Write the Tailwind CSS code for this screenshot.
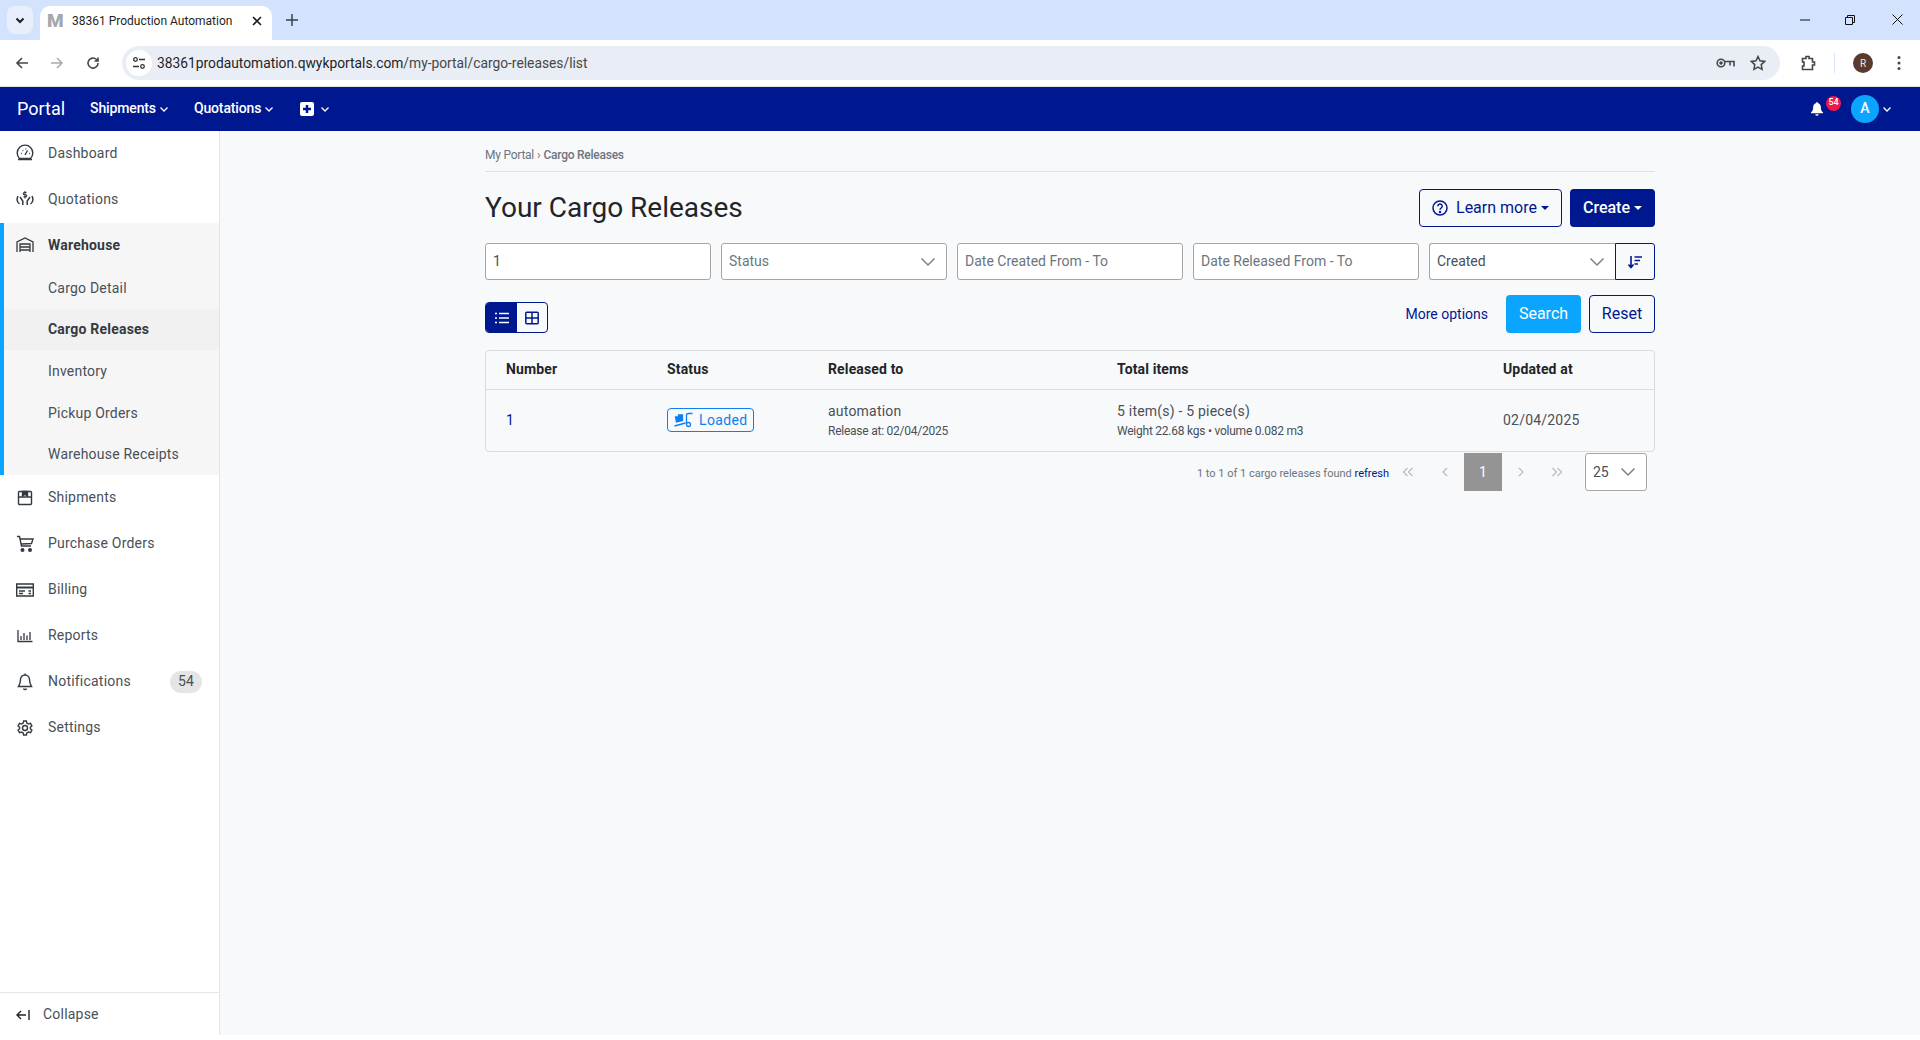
<!DOCTYPE html>
<html lang="en">
<head>
    <meta charset="UTF-8">
    <title>38361 Production Automation</title>
    <script src="https://cdn.jsdelivr.net/npm/@tailwindcss/browser@4"></script>
</head>
<body class="font-['Roboto',sans-serif] bg-white h-[1040px] overflow-hidden">
    <!-- Browser tab strip -->
    <div class="h-10 bg-[#d3e3fd] flex items-end relative">
        <div class="w-[26px] h-7 ml-[7px] mb-[6px] rounded-lg bg-[#e7effd] flex items-center justify-center">
            <svg class="w-3 h-3" viewBox="0 0 12 12" fill="none" stroke="#1f1f1f" stroke-width="2"><path d="M2.500 4.500 6 8l3.500-3.500"/></svg>
        </div>
        <div class="w-[232px] h-[34px] ml-[7px] pb-[5px] bg-white rounded-t-[10px] flex items-center pl-[7px]">
            <span class="font-black text-[19px] text-[#a3a8ad] w-[19px] leading-none">M</span>
            <span class="ml-[6px] text-[12px] text-[#1f1f1f] whitespace-nowrap">38361 Production Automation</span>
            <svg class="w-3 h-3 ml-auto mr-[9px]" viewBox="0 0 12 12" stroke="#1f1f1f" stroke-width="1.600"><path d="M2 2l8 8M10 2l-8 8"/></svg>
        </div>
        <svg class="w-3 h-3 ml-[14px] mb-[14px]" viewBox="0 0 12 12" stroke="#3c4043" stroke-width="1.500"><path d="M6 0v12M0 6h12"/></svg>
        <div class="ml-auto flex items-center h-10 pb-[1px]">
            <svg class="w-[10px] h-[10px] mr-[35px]" viewBox="0 0 10 10" stroke="#111" stroke-width="1"><path d="M0 5h10"/></svg>
            <svg class="w-[10px] h-[10px] mr-[37px]" viewBox="0 0 10 10" fill="none" stroke="#111" stroke-width="1"><path d="M.5 2.500h7v7h-7zM2.500 2.500v-2h7v7h-2"/></svg>
            <svg class="w-[11px] h-[11px] mr-[17px]" viewBox="0 0 11 11" stroke="#111" stroke-width="1"><path d="M.5.5l10 10M10.500.5l-10 10"/></svg>
        </div>
    </div>

    <!-- Browser toolbar -->
    <div class="h-[47px] bg-white rounded-t-lg border-b border-[#dfe1e5] flex items-center">
        <svg class="w-[14px] h-[14px] ml-[15px]" viewBox="0 0 14 14" fill="none" stroke="#474747" stroke-width="1.600"><path d="M13 7H2M7 2 2 7l5 5"/></svg>
        <svg class="w-[14px] h-[14px] ml-[21px]" viewBox="0 0 14 14" fill="none" stroke="#a8abaf" stroke-width="1.600"><path d="M1 7h11M7 2l5 5-5 5"/></svg>
        <svg class="w-[14px] h-[14px] ml-[22px]" viewBox="0 0 14 14" fill="none" stroke="#474747" stroke-width="1.600"><path d="M12 7a5 5 0 1 1-1.500-3.500L12 5M12 1.500V5H8.500"/></svg>
        <div class="w-[1658px] h-[34px] ml-[22px] rounded-full bg-[#e9eef6] flex items-center pl-[4px] relative">
            <div class="w-[26px] h-[26px] rounded-full bg-white flex items-center justify-center">
                <svg class="w-[14px] h-[14px]" viewBox="0 0 14 14" fill="none" stroke="#333" stroke-width="1.300"><circle cx="3.500" cy="3.500" r="1.800"/><path d="M7 3.500h6M1 10.500h6"/><circle cx="10.500" cy="10.500" r="1.800"/></svg>
            </div>
            <span class="ml-[5px] text-[13.800px] text-[#1f1f1f] whitespace-nowrap">38361prodautomation.qwykportals.com<span class="text-[#474747]">/my-portal/cargo-releases/list</span></span>
            <svg class="w-[19px] h-[12px] ml-auto mr-[15px]" viewBox="0 0 19 12" fill="none" stroke="#474747" stroke-width="1.600"><circle cx="5" cy="6" r="3.800"/><circle cx="5" cy="6" r="1" fill="#474747"/><path d="M9 4.500h9v5M14 4.500v4"/></svg>
            <svg class="w-4 h-4 mr-[14px]" viewBox="0 0 16 16" fill="none" stroke="#474747" stroke-width="1.500"><path d="M8 1.500l2 4.300 4.700.6-3.500 3.200.9 4.700L8 12l-4.100 2.300.9-4.700L1.300 6.400 6 5.800z"/></svg>
        </div>
        <svg class="w-4 h-4 ml-[21px]" viewBox="0 0 16 16" fill="none" stroke="#474747" stroke-width="1.600"><path d="M1.500 3.500h3.500V1.500h3v2h3.500v3.500h2v3h-2v4.500h-10V11h1.500V7H1.500z"/></svg>
        <div class="w-[1px] h-5 bg-[#d3e3fd] ml-[17px]"></div>
        <div class="w-5 h-5 rounded-full bg-[#5b3a2e] text-[#f1e7e2] text-[10px] flex items-center justify-center ml-[18px]">R</div>
        <svg class="w-1 h-4 ml-[24px]" viewBox="0 0 4 16" fill="#474747"><circle cx="2" cy="2.500" r="1.500"/><circle cx="2" cy="8" r="1.500"/><circle cx="2" cy="13.500" r="1.500"/></svg>
    </div>

    <!-- Portal navbar -->
    <nav class="h-11 pb-[1px] bg-[#00188f] text-white flex items-center">
        <span class="ml-[17px] text-[18px]">Portal</span>
        <span class="ml-[25px] text-[14px] font-medium tracking-[-0.01em]">Shipments</span>
        <svg class="w-[10px] h-[10px] ml-[3px]" viewBox="0 0 10 10" fill="none" stroke="#fff" stroke-width="1.300"><path d="M1.500 3.500 5 7l3.500-3.500"/></svg>
        <span class="ml-[25px] text-[14px] font-medium tracking-[-0.01em]">Quotations</span>
        <svg class="w-[10px] h-[10px] ml-[3px]" viewBox="0 0 10 10" fill="none" stroke="#fff" stroke-width="1.300"><path d="M1.500 3.500 5 7l3.500-3.500"/></svg>
        <svg class="w-[14px] h-[14px] ml-[26px]" viewBox="0 0 14 14"><rect width="14" height="14" rx="2" fill="#fff"/><path d="M7 3v8M3 7h8" stroke="#00188f" stroke-width="2.500"/></svg>
        <svg class="w-[10px] h-[10px] ml-[6px]" viewBox="0 0 10 10" fill="none" stroke="#fff" stroke-width="1.300"><path d="M1.500 3.500 5 7l3.500-3.500"/></svg>
        <div class="ml-auto flex items-center">
            <div class="relative mr-[28px]">
                <svg class="w-3 h-[14px] block" viewBox="0 0 14 16" fill="#fff"><path d="M7 0c.8 0 1.300.6 1.300 1.300C10.500 2 11.500 3.800 11.500 6c0 3.500 1 4.500 2.500 6v1H0v-1c1.500-1.500 2.500-2.500 2.500-6 0-2.200 1-4 3.200-4.700C5.700.6 6.200 0 7 0zM5 14h4a2 2 0 0 1-4 0z"/></svg>
                <span class="absolute top-[-6px] left-[15px] w-[15px] h-[15px] rounded-full bg-[#f0174a] text-[9px] font-medium flex items-center justify-center">54</span>
            </div>
            <div class="w-7 h-7 rounded-full bg-[#0ba5ff] text-[14px] font-medium flex items-center justify-center">A</div>
            <svg class="w-[10px] h-[10px] ml-[3px] mr-[28px]" viewBox="0 0 10 10" fill="none" stroke="#fff" stroke-width="1.300"><path d="M1.500 3.500 5 7l3.500-3.500"/></svg>
        </div>
    </nav>

    <div class="flex h-[904px]">
        <!-- Sidebar -->
        <aside class="w-[220px] shrink-0 bg-white border-r border-[#e3e5ea] flex flex-col text-[14px] tracking-[0.015em] text-[#495057]">
            <a class="h-[46px] flex items-center pl-[16px] pb-[2px]">
                <svg class="w-[18px] h-[18px] mr-[14px]" viewBox="0 0 18 18" fill="none" stroke="#343a40" stroke-width="1.400"><path d="M3.500 14.500a7.800 7.800 0 1 1 11 0zM2 15.500h14"/><path d="M9 11l2.500-4.500M5 9.500h.8M6.500 6.500h.8M9.500 5h.8M13 9.500h.8"/></svg>
                Dashboard
            </a>
            <a class="h-[46px] flex items-center pl-[16px] pb-[2px]">
                <svg class="w-[18px] h-[18px] mr-[14px]" viewBox="0 0 18 18" fill="none" stroke="#343a40" stroke-width="1.500"><path d="M2 6C.5 9 1 12 3.500 14M16 6c1.500 3 1 6-1.500 8M4 7l2.800 4v4M14 7l-2.800 4v4"/><path d="M10.500 2.500H8.300a1 1 0 0 0 0 2.200h1.400a1 1 0 0 1 0 2.200H7.500M9 1v7.500" stroke-width="1.100"/></svg>
                Quotations
            </a>

            <div class="border-l-4 border-[#0ba5ff] bg-[#f6f6f7]">
                <a class="h-[44px] flex items-center pl-[12px] font-bold text-[#343a40]">
                    <svg class="w-[18px] h-[18px] mr-[14px]" viewBox="0 0 18 18" fill="none" stroke="#343a40" stroke-width="1.300"><path d="M1 16V6l8-4 8 4v10"/><path d="M4 16V8h10v8M4 11h10M4 14h10"/></svg>
                    Warehouse
                </a>
                <a class="h-[41.600px] flex items-center pl-[44px] pt-[2px]">Cargo Detail</a>
                <a class="h-[41.600px] flex items-center pl-[44px] pt-[1px] bg-[#f1f1f2] font-bold text-[#343a40]">Cargo Releases</a>
                <a class="h-[41.600px] flex items-center pl-[44px] pt-[2px]">Inventory</a>
                <a class="h-[41.600px] flex items-center pl-[44px] pt-[1px]">Pickup Orders</a>
                <a class="h-[41.600px] flex items-center pl-[44px]">Warehouse Receipts</a>
            </div>

            <a class="h-[46px] flex items-center pl-[16px]">
                <svg class="w-[18px] h-[18px] mr-[14px]" viewBox="0 0 18 18" fill="none" stroke="#343a40" stroke-width="1.400"><path d="M3.500 2.500h11a1 1 0 0 1 1 1v11a1 1 0 0 1-1 1h-11a1 1 0 0 1-1-1v-11a1 1 0 0 1 1-1zM2.500 8h13"/><path d="M6.500 2.500h5V7L9 5.500 6.500 7z" fill="#343a40"/></svg>
                Shipments
            </a>
            <a class="h-[46px] flex items-center pl-[16px]">
                <svg class="w-[18px] h-[18px] mr-[14px]" viewBox="0 0 18 18" fill="none" stroke="#343a40" stroke-width="1.400"><path d="M1 1.500h2.500l2 9.500h9.500M4 4h13l-1.500 4.500-10 .5"/><circle cx="6.500" cy="15" r="1.300" fill="#343a40"/><circle cx="14" cy="15" r="1.300" fill="#343a40"/></svg>
                Purchase Orders
            </a>
            <a class="h-[46px] flex items-center pl-[16px]">
                <svg class="w-[18px] h-[18px] mr-[14px]" viewBox="0 0 18 18" fill="none" stroke="#343a40" stroke-width="1.400"><path d="M.7 3h16.600v12H.7z"/><path d="M.7 6.500h16.600" stroke-width="2"/><path d="M3 10h6M3 12.500h4M12.500 10h2.500M12.500 12.500h2.500"/></svg>
                Billing
            </a>
            <a class="h-[46px] flex items-center pl-[16px]">
                <svg class="w-[18px] h-[18px] mr-[14px]" viewBox="0 0 18 18" fill="none" stroke="#343a40" stroke-width="1.300"><path d="M2 3v11.500h14.500M5 13V9M8 13V6M11 13V8.500M14 13V5"/></svg>
                Reports
            </a>
            <a class="h-[46px] flex items-center pl-[16px]">
                <svg class="w-[18px] h-[18px] mr-[14px]" viewBox="0 0 18 18" fill="none" stroke="#343a40" stroke-width="1.400"><path d="M9 2a4.500 4.500 0 0 0-4.500 4.500c0 4-1 5.500-2 7h13c-1-1.500-2-3-2-7A4.500 4.500 0 0 0 9 2zM7.500 15.500a1.600 1.600 0 0 0 3 0M9 .5V2"/></svg>
                Notifications
                <span class="ml-auto mr-[17px] w-8 h-[22px] rounded-full bg-[#e5e5e5] flex items-center justify-center">54</span>
            </a>
            <a class="h-[46px] flex items-center pl-[16px]">
                <svg class="w-[18px] h-[18px] mr-[14px]" viewBox="0 0 18 18" fill="none" stroke="#343a40" stroke-width="1.400"><circle cx="9" cy="9" r="2.500"/><path d="M7.600 2h2.800l.4 2 1.700 1 2-.6 1.400 2.400-1.500 1.400v1.600l1.500 1.400-1.400 2.400-2-.6-1.700 1-.4 2H7.600l-.4-2-1.700-1-2 .6-1.400-2.400 1.500-1.400V8.200L2.100 6.800l1.400-2.400 2 .6 1.700-1z"/></svg>
                Settings
            </a>

            <a class="mt-auto h-[43px] border-t border-[#e3e5ea] flex items-center pl-[16px] pt-[1px]">
                <svg class="w-[14px] h-[14px] mr-[13px]" viewBox="0 0 14 14" fill="none" stroke="#212529" stroke-width="1.400"><path d="M10 7H1M5 3 1 7l4 4M13 2v10"/></svg>
                Collapse
            </a>
        </aside>

        <!-- Page content -->
        <main class="flex-1 bg-[#f8f9fb] pl-[265px] pr-[265px]">
            <div class="h-[41px] pt-[7px] border-b border-[#dee2e6] flex items-center text-[12px] text-[#6c757d] tracking-[-0.02em]">
                <span>My Portal</span><span class="mx-[3px]">›</span><span class="font-medium text-[#6c757d]">Cargo Releases</span>
            </div>

            <div class="h-[38px] mt-[17px] flex items-center">
                <h1 class="text-[28px] text-[#212529]">Your Cargo Releases</h1>
                <button class="ml-auto w-[143px] h-[38px] rounded-[4px] border border-[#00188f] text-[#00188f] text-[16px] flex items-center justify-center">
                    <svg class="w-4 h-4 mr-[8px]" viewBox="0 0 16 16" fill="none" stroke="#00188f" stroke-width="1.500"><circle cx="8" cy="8" r="7"/><path d="M5.800 6.200a2.200 2.200 0 1 1 3.300 1.900c-.7.400-1.100.8-1.100 1.700"/><circle cx="8" cy="12" r=".5"/></svg>
                    Learn more
                    <span class="ml-[4px] border-x-[4px] border-x-transparent border-t-[4px] border-t-[#00188f]"></span>
                </button>
                <button class="ml-2 w-[85px] h-[38px] rounded-[4px] bg-[#00188f] text-white text-[16px] font-medium flex items-center justify-center">
                    Create
                    <span class="ml-[4px] border-x-[4px] border-x-transparent border-t-[4px] border-t-white"></span>
                </button>
            </div>

            <!-- Filters -->
            <div class="grid grid-cols-5 gap-[10px] mt-[16px] text-[14px]">
                <div class="h-[37px] rounded-[3px] border border-[#a6a6a6] bg-white flex items-center px-[7px] text-[#495057]">1</div>
                <div class="h-[37px] rounded-[3px] border border-[#a6a6a6] bg-white flex items-center px-[7px] text-[#6c757d]">
                    Status
                    <svg class="w-4 h-4 ml-auto mr-[3px]" viewBox="0 0 16 16" fill="none" stroke="#808080" stroke-width="1.500"><path d="M1.500 4.500 8 11l6.500-6.500"/></svg>
                </div>
                <div class="h-[37px] rounded-[3px] border border-[#a6a6a6] bg-white flex items-center px-[7px] text-[#6c757d]">Date Created From - To</div>
                <div class="h-[37px] rounded-[3px] border border-[#a6a6a6] bg-white flex items-center px-[7px] text-[#6c757d]">Date Released From - To</div>
                <div class="flex h-[37px]">
                    <div class="flex-1 rounded-l-[3px] border border-r-0 border-[#a6a6a6] bg-white flex items-center px-[7px] text-[#495057]">
                        Created
                        <svg class="w-4 h-4 ml-auto mr-[3px]" viewBox="0 0 16 16" fill="none" stroke="#808080" stroke-width="1.500"><path d="M1.500 4.500 8 11l6.500-6.500"/></svg>
                    </div>
                    <div class="w-[40px] rounded-r-[3px] border border-[#00188f] flex items-center justify-center">
                        <svg class="w-[14px] h-[14px]" viewBox="0 0 14 14" fill="none" stroke="#00188f" stroke-width="1.600"><path d="M3 1v11M.5 9.500 3 12.500l2.500-3M6.500 2H14M6.500 5.500h5.500M6.500 9H10"/></svg>
                    </div>
                </div>
            </div>

            <!-- View toggle and search actions -->
            <div class="flex items-start mt-[15px]">
                <div class="flex w-[63px] h-[31px] mt-[7px] rounded-[4px] border border-[#00188f] overflow-hidden">
                    <div class="w-[31px] bg-[#00188f] flex items-center justify-center">
                        <svg class="w-[14px] h-[14px]" viewBox="0 0 14 14" fill="none" stroke="#fff" stroke-width="1.500"><path d="M4 2.500h10M4 7h10M4 11.500h10M0 2.500h2M0 7h2M0 11.500h2"/></svg>
                    </div>
                    <div class="flex-1 flex items-center justify-center">
                        <svg class="w-[14px] h-[14px]" viewBox="0 0 14 14" fill="none" stroke="#00188f" stroke-width="1.500"><rect x=".8" y="1.300" width="12.400" height="11.400" rx="1"/><path d="M.8 7h12.400M7 1.300v11.400"/></svg>
                    </div>
                </div>
                <a class="ml-auto mt-[9px] text-[14px] text-[#00188f]">More options</a>
                <button class="ml-[18px] w-[75px] h-[38px] rounded-[4px] bg-[#0ba5ff] text-white text-[16px]">Search</button>
                <button class="ml-2 w-[66px] h-[38px] rounded-[4px] border border-[#00188f] text-[#00188f] text-[16px]">Reset</button>
            </div>

            <!-- Cargo releases table -->
            <div class="mt-[17px] h-[102px] rounded-[4px] border border-[#d9dce1]">
                <div class="h-[39px] pb-[2px] border-b border-[#d9dce1] grid grid-cols-[161px_161px_289px_386px_1fr] pl-[20px] items-center text-[14px] font-bold tracking-[0.01em] text-[#212529]">
                    <span>Number</span>
                    <span>Status</span>
                    <span>Released to</span>
                    <span>Total items</span>
                    <span>Updated at</span>
                </div>
                <div class="h-[61px] grid grid-cols-[161px_161px_289px_386px_1fr] pl-[20px] items-center text-[#495057]">
                    <a class="text-[14px] text-[#00188f]">1</a>
                    <div class="pt-[2px]">
                        <span class="inline-flex items-center w-[87px] h-[24px] rounded-[4px] border border-[#0d7ff0] text-[14px] text-[#0d7ff0] tracking-[0.025em] pl-[6px]">
                            <svg class="w-[19px] h-[16px] mr-[6px]" viewBox="0 0 19 16" fill="none" stroke="#0d7ff0" stroke-width="1.300"><path d="M.5 14l11-3M12.500 11V3q0-1.500 2-1.500h4"/><circle cx="14.500" cy="12.500" r="2"/><path d="M1.500 5h3V3h4v5.500l-6 1.500z" fill="#0d7ff0"/></svg>
                            Loaded
                        </span>
                    </div>
                    <div>
                        <p class="text-[14px] tracking-[0.015em] leading-[18px]">automation</p>
                        <p class="text-[12px] tracking-[-0.02em] leading-[18px] mt-[2px]">Release at: 02/04/2025</p>
                    </div>
                    <div>
                        <p class="text-[14px] tracking-[0.015em] leading-[18px]">5 item(s) - 5 piece(s)</p>
                        <p class="text-[12px] tracking-[-0.02em] leading-[18px] mt-[2px]">Weight 22.68 kgs • volume 0.082 m3</p>
                    </div>
                    <span class="text-[14px] tracking-[0.015em]">02/04/2025</span>
                </div>
            </div>

            <!-- Pagination -->
            <div class="flex justify-end items-center h-[38px] mt-[1px] pr-2">
                <span class="mt-[5px] text-[11px] text-[#6c757d]">1 to 1 of 1 cargo releases found <a class="text-[#00188f]">refresh</a></span>
                <svg class="w-3 h-3 ml-[13px]" viewBox="0 0 12 12" fill="none" stroke="#b8bcc2" stroke-width="1.200"><path d="M5.500 2 1.500 6l4 4M10.500 2l-4 4 4 4"/></svg>
                <svg class="w-3 h-3 ml-[25px]" viewBox="0 0 12 12" fill="none" stroke="#b8bcc2" stroke-width="1.200"><path d="M8 2 4 6l4 4"/></svg>
                <span class="w-[38px] h-[38px] ml-[13px] bg-[#949494] text-white text-[14px] flex items-center justify-center">1</span>
                <svg class="w-3 h-3 ml-[13px]" viewBox="0 0 12 12" fill="none" stroke="#b8bcc2" stroke-width="1.200"><path d="M4 2l4 4-4 4"/></svg>
                <svg class="w-3 h-3 ml-[24px]" viewBox="0 0 12 12" fill="none" stroke="#b8bcc2" stroke-width="1.200"><path d="M1.500 2l4 4-4 4M6.500 2l4 4-4 4"/></svg>
                <div class="w-[62px] h-[38px] ml-[22px] rounded-[3px] border border-[#a6a6a6] bg-white flex items-center pl-[7px] text-[14px] text-[#495057]">
                    25
                    <svg class="w-4 h-4 ml-auto mr-[10px]" viewBox="0 0 16 16" fill="none" stroke="#808080" stroke-width="1.500"><path d="M1.500 4.500 8 11l6.500-6.500"/></svg>
                </div>
            </div>
        </main>
    </div>
</body>
</html>
